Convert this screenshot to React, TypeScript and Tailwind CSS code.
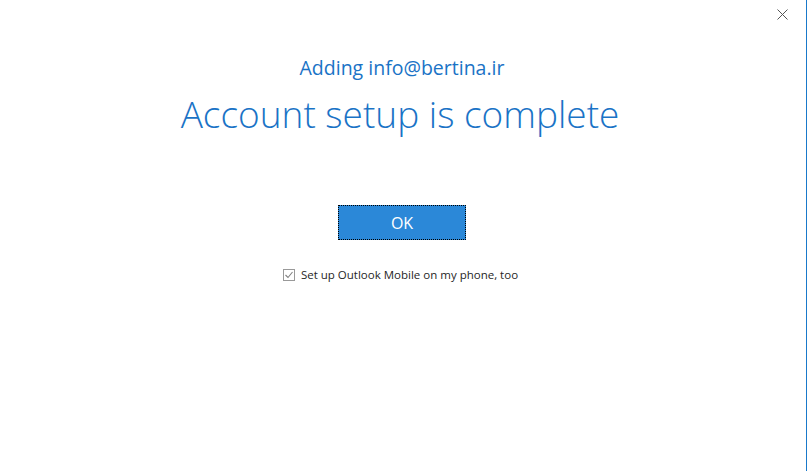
export default function App() {
  return (
    <div
      className="relative flex h-[471px] w-[807px] overflow-hidden bg-white"
      style={{ fontFamily: '"Open Sans", "Noto Sans", sans-serif' }}
    >
      <div className="flex w-[806px] flex-col items-center pl-[1px] pr-[3px] pt-[54px]">
        <div className="text-[19.5px] leading-[28px] text-[#1a73c6]">Adding info@bertina.ir</div>
        <h1 className="mt-[8px] pr-[4px] text-[37px] font-light leading-[48px] text-[#1a73c6]">
          Account setup is complete
        </h1>
        <button className="mt-[67px] flex h-[35px] w-[128px] items-center justify-center border border-dotted border-black bg-[#2b88d8] p-0 outline-none">
          <span className="text-[16px] text-white">OK</span>
        </button>
        <label className="mt-[26px] flex items-center gap-[6px] pr-[3px] text-[11.5px] text-[#262626]">
          <span className="flex h-[12px] w-[12px] items-center justify-center border border-[#999] bg-white">
            <svg width="10" height="10" viewBox="0 0 10 10" fill="none">
              <path d="M1.5 5 L4 7.5 L8.5 2" stroke="#808080" strokeWidth="1.1" />
            </svg>
          </span>
          Set up Outlook Mobile on my phone, too
        </label>
      </div>
      <div className="w-px bg-[#1979ca]" />
      <button className="absolute right-[18px] top-[7px] flex h-[14px] w-[14px] items-center justify-center p-0">
        <svg width="11" height="11" viewBox="0 0 11 11">
          <path d="M0.5 0.5 L10.5 10.5 M10.5 0.5 L0.5 10.5" stroke="#555" strokeWidth="1" />
        </svg>
      </button>
    </div>
  );
}
